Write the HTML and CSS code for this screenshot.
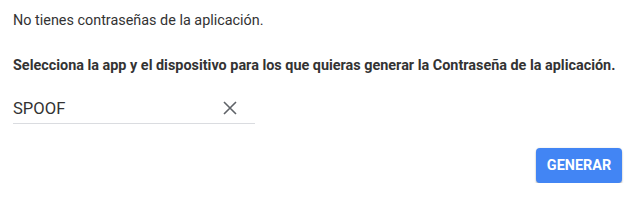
FILE: index.html
```html
<!DOCTYPE html>
<html lang="es">
<head>
    <meta charset="UTF-8">
    <meta name="viewport" content="width=device-width, initial-scale=1.0">
    <title>Contraseñas de aplicación</title>
    <link rel="stylesheet" href="styles.css">
</head>
<body>
    <section class="app-passwords">
        <p class="empty">No tienes contraseñas de la aplicación.</p>
        <p class="hint">Selecciona la app y el dispositivo para los que quieras generar la Contraseña de la aplicación.</p>

        <div class="field">
            <input type="text" id="app-name" value="SPOOF">
            <button type="button" class="clear" aria-label="Borrar">
                <svg width="14" height="14" viewBox="0 0 14 14">
                    <path d="M1 1 L13 13 M13 1 L1 13" stroke="#5f6368" stroke-width="1.6" fill="none"/>
                </svg>
            </button>
        </div>

        <div class="actions">
            <button type="button" class="generate">Generar</button>
        </div>
    </section>
</body>
</html>
```

FILE: styles.css
```css
body {
    margin: 0;
    font-family: Roboto, Arial, sans-serif;
    color: #333333;
    background: #ffffff;
}

.app-passwords {
    padding: 12px 16px 0 13px;
}

.empty {
    margin: 0;
    font-size: 14.4px;
    line-height: 17px;
}

.hint {
    margin: 28px 0 0;
    font-size: 14.4px;
    line-height: 17px;
    font-weight: bold;
}

.field {
    display: flex;
    align-items: center;
    width: 242px;
    margin-top: 19px;
    border-bottom: 1px solid #dadce0;
}

.field input {
    flex: 1;
    min-width: 0;
    border: none;
    outline: none;
    padding: 6px 0 5px;
    font-family: Roboto, Arial, sans-serif;
    font-size: 16.6px;
    color: #333333;
    background: transparent;
}

.clear {
    border: none;
    background: none;
    padding: 0;
    margin-right: 18px;
    display: flex;
    cursor: pointer;
}

.actions {
    display: flex;
    justify-content: flex-end;
    margin-top: 24px;
}

.generate {
    background-color: #4285f4;
    color: #ffffff;
    border: none;
    border-radius: 4px;
    height: 35px;
    width: 86px;
    font-family: Roboto, Arial, sans-serif;
    font-size: 14.4px;
    font-weight: bold;
    text-transform: uppercase;
    box-shadow: 0 2px 2px rgba(0, 0, 0, 0.24), 0 0 2px rgba(0, 0, 0, 0.12);
    cursor: pointer;
}
```
